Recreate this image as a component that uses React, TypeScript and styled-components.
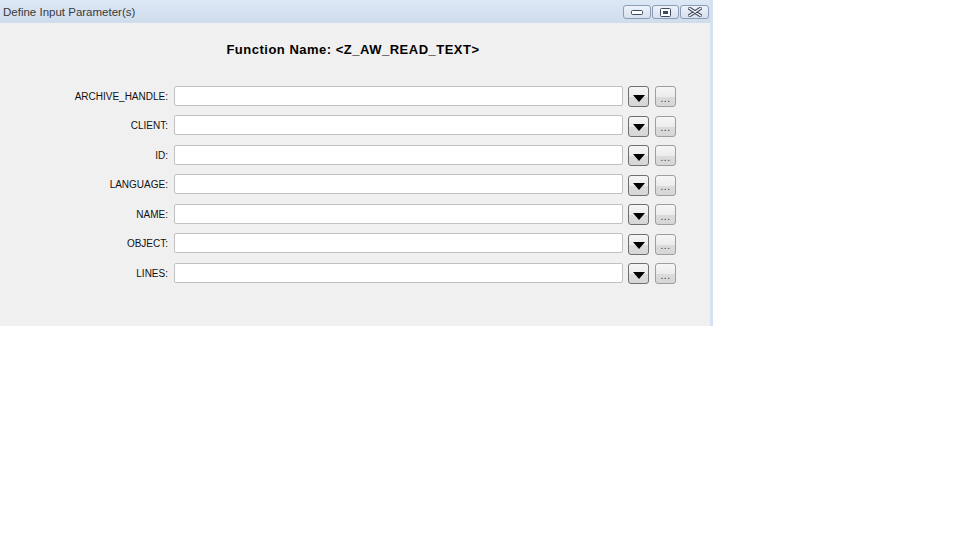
import React from 'react';
import styled, { createGlobalStyle } from 'styled-components';

const GlobalStyle = createGlobalStyle`
    html, body {
        margin: 0;
        padding: 0;
        background: #ffffff;
    }
`;

const Window = styled.div`
    width: 713px;
    height: 326px;
    display: flex;
    flex-direction: column;
    background: #f0f0f0;
    border-right: 3px solid #d3e1f1;
    box-sizing: border-box;
    font-family: 'Liberation Sans', Arial, sans-serif;
`;

const TitleBar = styled.div`
    height: 23px;
    display: flex;
    align-items: center;
    justify-content: space-between;
    padding: 0 1px 0 3px;
    background: linear-gradient(#dde8f5, #cfdcec);
    color: #3a3a3a;
    font-size: 11.5px;
`;

const Controls = styled.div`
    display: flex;
    gap: 1px;
    margin-top: 1px;
`;

const CaptionButton = styled.div<{ $w: number }>`
    width: ${p => p.$w}px;
    height: 14px;
    box-sizing: border-box;
    border: 1px solid #8b9cb4;
    border-radius: 3px;
    background: linear-gradient(#eef3fa, #d6e0ee);
    display: flex;
    align-items: center;
    justify-content: center;
`;

const Content = styled.div`
    flex: 1;
    padding-top: 19px;
    display: flex;
    flex-direction: column;
`;

const Heading = styled.div`
    text-align: center;
    font-weight: bold;
    font-size: 13px;
    letter-spacing: 0.5px;
    color: #000;
    margin-left: -4px;
    height: 16px;
    line-height: 16px;
`;

const Form = styled.div`
    margin-top: 28px;
    display: grid;
    grid-template-columns: 168px 449px 21px 21px;
    row-gap: 8.5px;
    align-items: center;
`;

const Label = styled.label`
    text-align: right;
    font-size: 10px;
    color: #111;
    margin-top: -1px;
`;

const Field = styled.input`
    height: 20px;
    box-sizing: border-box;
    border: 1px solid #c2c2c2;
    border-radius: 2px;
    background: #fff;
    margin: -2px 0 0 6px;
    width: 449px;
`;

const SideButton = styled.div<{ $dark?: boolean }>`
    width: 21px;
    height: 21px;
    box-sizing: border-box;
    border: 1px solid ${p => (p.$dark ? '#6f6f6f' : '#9e9e9e')};
    border-radius: 3px;
    background: linear-gradient(#f6f6f6 0%, #ececec 50%, #dcdcdc 51%, #d6d6d6 100%);
    display: flex;
    align-items: center;
    justify-content: center;
    font-size: 10px;
    color: #333;
    margin-left: ${p => (p.$dark ? '11px' : '17px')};
`;

const Dots = styled.span`
    margin-top: 3px;
    letter-spacing: 0.5px;
`;

const fields = ['ARCHIVE_HANDLE', 'CLIENT', 'ID', 'LANGUAGE', 'NAME', 'OBJECT', 'LINES'];

const App: React.FC = () => {
    return (
        <>
            <GlobalStyle />
            <Window>
                <TitleBar>
                    <span>Define Input Parameter(s)</span>
                    <Controls>
                        <CaptionButton $w={28}>
                            <svg width="12" height="6" viewBox="0 0 12 6">
                                <rect x="0.5" y="1.5" width="11" height="4" rx="1" fill="#fff" stroke="#3d4b5e" />
                            </svg>
                        </CaptionButton>
                        <CaptionButton $w={27}>
                            <svg width="11" height="9" viewBox="0 0 11 9">
                                <rect x="0.5" y="0.5" width="10" height="8" rx="1" fill="#fff" stroke="#3d4b5e" />
                                <rect x="3" y="3" width="5" height="3" fill="#3d4b5e" />
                            </svg>
                        </CaptionButton>
                        <CaptionButton $w={29}>
                            <svg width="14" height="10" viewBox="0 0 14 10">
                                <path d="M1 1 L13 9 M13 1 L1 9" stroke="#3d4b5e" strokeWidth="3.4" strokeLinecap="round" />
                                <path d="M1 1 L13 9 M13 1 L1 9" stroke="#fff" strokeWidth="1.4" strokeLinecap="round" />
                            </svg>
                        </CaptionButton>
                    </Controls>
                </TitleBar>
                <Content>
                    <Heading>Function Name: &lt;Z_AW_READ_TEXT&gt;</Heading>
                    <Form>
                        {fields.map(name => (
                            <React.Fragment key={name}>
                                <Label>{name}:</Label>
                                <Field />
                                <SideButton $dark>
                                    <svg width="12" height="7" viewBox="0 0 12 7" style={{ marginTop: 3 }}>
                                        <path d="M0 0 H12 L6 7 Z" fill="#000" />
                                    </svg>
                                </SideButton>
                                <SideButton>
                                    <Dots>...</Dots>
                                </SideButton>
                            </React.Fragment>
                        ))}
                    </Form>
                </Content>
            </Window>
        </>
    );
};

export default App;
